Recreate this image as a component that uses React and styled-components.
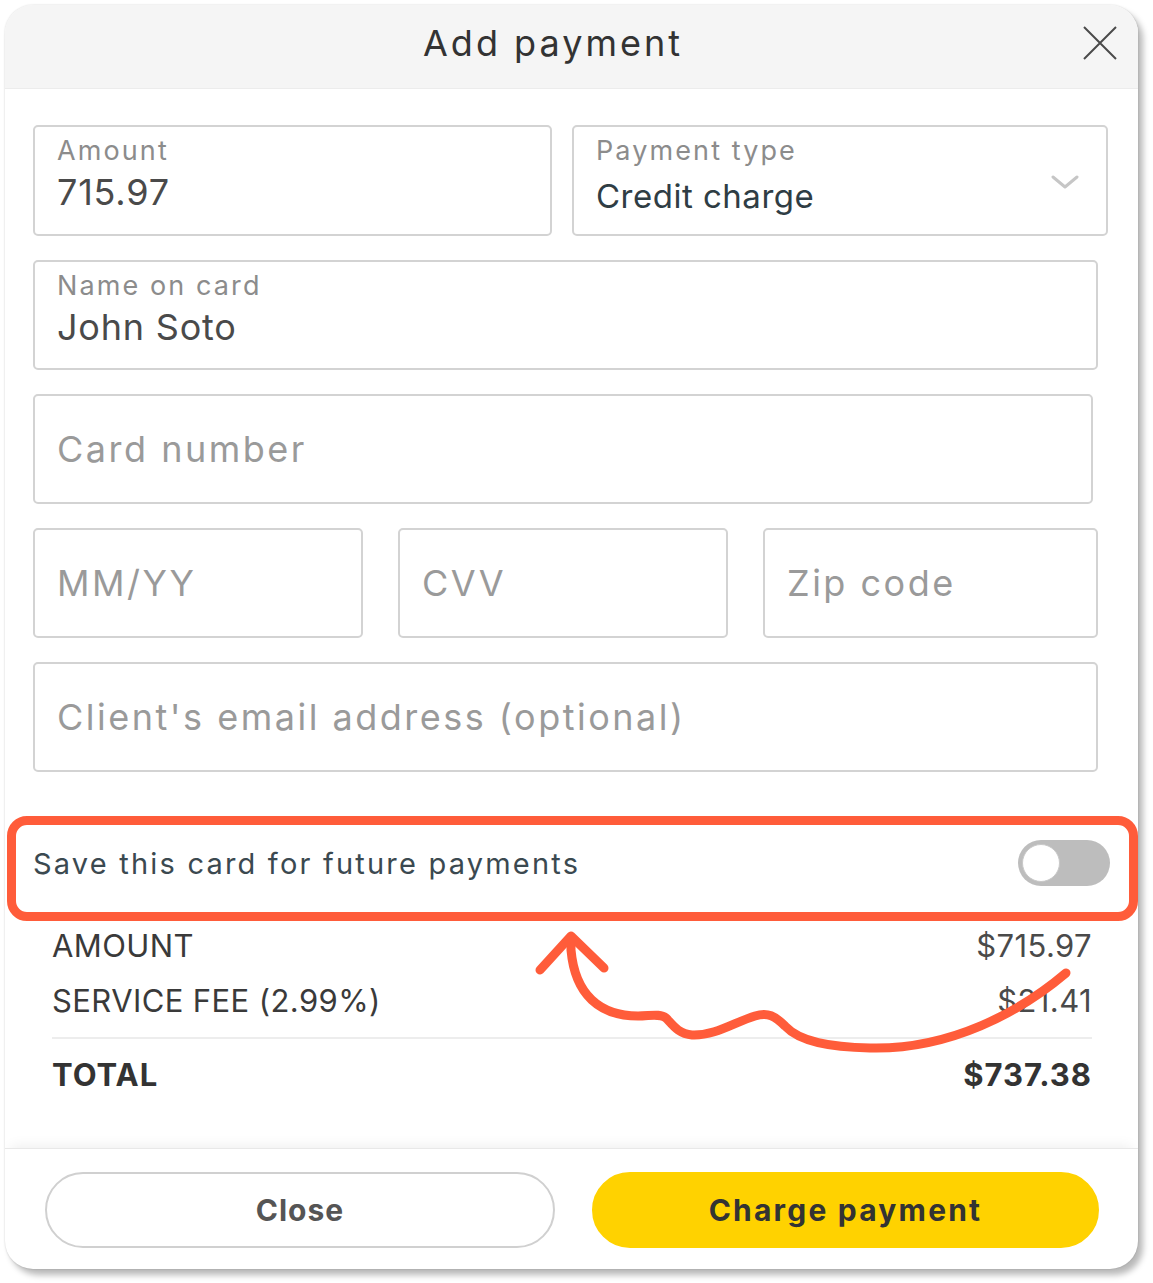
import React, { useState } from 'react';
import styled, { createGlobalStyle } from 'styled-components';

const GlobalStyle = createGlobalStyle`
  html, body {
    margin: 0;
    padding: 0;
    background: #ffffff;
  }

  body {
    font-family: Inter, 'Open Sans', sans-serif;
    -webkit-font-smoothing: antialiased;
  }
`;

const Page = styled.div`
  position: relative;
  width: 1153px;
  height: 1283px;
  padding: 5px 0 0 5px;
  box-sizing: border-box;
`;

const Modal = styled.div`
  width: 1133px;
  background: #ffffff;
  border-radius: 28px;
  overflow: hidden;
  box-shadow: 5px 6px 6px rgba(0, 0, 0, 0.28), 0 0 2px rgba(0, 0, 0, 0.18);
`;

const Header = styled.header`
  display: grid;
  grid-template-columns: 1fr auto 1fr;
  align-items: center;
  height: 84px;
  background: #f5f5f5;
  border-bottom: 1px solid #ececec;
  box-sizing: border-box;
  padding: 0 21px 0 0;

  h2 {
    grid-column: 2;
    margin: 0 16px 8px 0;
    font-size: 36px;
    font-weight: 400;
    color: #333333;
    letter-spacing: 3px;
  }
`;

const CloseIcon = styled.button`
  grid-column: 3;
  justify-self: end;
  width: 34px;
  height: 34px;
  padding: 0;
  margin-bottom: 8px;
  border: none;
  background: transparent;
  cursor: pointer;

  svg {
    display: block;
  }
`;

const Body = styled.div`
  display: flex;
  flex-direction: column;
  gap: 24px;
  padding: 36px 0 0 28px;
`;

const Row = styled.div`
  display: grid;
  grid-template-columns: ${({ $cols }) => $cols};
  column-gap: ${({ $gap }) => $gap}px;
`;

const Field = styled.div`
  position: relative;
  display: flex;
  flex-direction: column;
  justify-content: ${({ $empty }) => ($empty ? 'center' : 'flex-start')};
  width: ${({ $w }) => ($w ? `${$w}px` : 'auto')};
  height: ${({ $h }) => $h || 110}px;
  box-sizing: border-box;
  padding: ${({ $empty }) => ($empty ? '0 0 0 22px' : '8px 22px 0')};
  border: 2px solid #d3d3d3;
  border-radius: 5px;
  background: #ffffff;
`;

const Label = styled.span`
  font-size: 27px;
  line-height: 32px;
  color: #8c8c8c;
  letter-spacing: 2.1px;
`;

const Value = styled.span`
  margin-top: ${({ $dark }) => ($dark ? 8 : 4)}px;
  font-size: ${({ $dark }) => ($dark ? 33 : 36)}px;
  line-height: 42px;
  color: ${({ $dark }) => ($dark ? '#2f3d44' : '#4a4a4a')};
  letter-spacing: ${({ $dark }) => ($dark ? 0.5 : 0.8)}px;
`;

const Placeholder = styled.span`
  font-size: 36px;
  line-height: 42px;
  color: #9a9a9a;
  letter-spacing: 2.5px;
`;

const Chevron = styled.svg`
  position: absolute;
  right: 27px;
  top: 48px;
`;

const SaveRow = styled.label`
  display: flex;
  align-items: center;
  justify-content: space-between;
  height: 105px;
  margin: 44px 0 0 2px;
  padding: 0 19px 11px 17px;
  box-sizing: border-box;
  border: 9px solid #ff5c3a;
  border-radius: 20px;
  font-size: 29px;
  color: #3b4950;
  letter-spacing: 2.2px;
  cursor: pointer;
`;

const Toggle = styled.span`
  position: relative;
  display: block;
  width: 92px;
  height: 46px;
  border-radius: 23px;
  background: ${({ $on }) => ($on ? '#ffd200' : '#bdbdbd')};
  flex-shrink: 0;

  &::after {
    content: '';
    position: absolute;
    top: 4px;
    left: ${({ $on }) => ($on ? '50px' : '4px')};
    width: 38px;
    height: 38px;
    box-sizing: border-box;
    border-radius: 50%;
    background: #ffffff;
    border: 1.5px solid #c9c9c9;
  }
`;

const Summary = styled.div`
  margin-top: -3px;
  padding: 0 46px 46px 47px;
`;

const SummaryRow = styled.div`
  display: flex;
  justify-content: space-between;
  align-items: center;
  height: 55px;
  font-size: 31px;
  font-weight: ${({ $total }) => ($total ? 700 : 400)};
  color: ${({ $total }) => ($total ? '#333333' : '#3a3a3a')};
  letter-spacing: ${({ $total }) => ($total ? '1px' : '0.4px')};

  span:last-child {
    color: ${({ $total }) => ($total ? '#333333' : '#4a4a4a')};
  }
`;

const Divider = styled.hr`
  margin: 9px 0 8px;
  border: none;
  height: 2px;
  background: #ededed;
`;

const Footer = styled.footer`
  display: grid;
  grid-template-columns: 510px 507px;
  column-gap: 37px;
  padding: 23px 39px 21px 40px;
  border-top: 1px solid #e8e8e8;
  box-shadow: 0 -8px 12px -6px rgba(0, 0, 0, 0.07);
`;

const Button = styled.button`
  height: 76px;
  border-radius: 38px;
  border: 2px solid ${({ $primary }) => ($primary ? '#ffd200' : '#d0d0d0')};
  background: ${({ $primary }) => ($primary ? '#ffd200' : '#ffffff')};
  color: ${({ $primary }) => ($primary ? '#333333' : '#555555')};
  font-family: Inter, 'Open Sans', sans-serif;
  font-size: 30px;
  font-weight: 700;
  letter-spacing: ${({ $primary }) => ($primary ? 2.2 : 1)}px;
  cursor: pointer;
`;

const Annotation = styled.svg`
  position: absolute;
  top: 0;
  left: 0;
  pointer-events: none;
`;

const App = () => {
  const [saveCard, setSaveCard] = useState(false);

  return (
    <Page>
      <GlobalStyle />
      <Modal>
        <Header>
          <h2>Add payment</h2>
          <CloseIcon aria-label="Close">
            <svg width="34" height="34" viewBox="0 0 34 34">
              <path d="M1 1 L33 33 M33 1 L1 33" stroke="#4a4a4a" strokeWidth="2" fill="none" />
            </svg>
          </CloseIcon>
        </Header>

        <Body>
          <Row $cols="519px 536px" $gap={20}>
            <Field $h={111}>
              <Label>Amount</Label>
              <Value>715.97</Value>
            </Field>
            <Field $h={111}>
              <Label>Payment type</Label>
              <Value $dark>Credit charge</Value>
              <Chevron width="28" height="14" viewBox="0 0 28 14">
                <path d="M2 2 L14 12 L26 2" stroke="#c6c6c6" strokeWidth="3" fill="none" strokeLinecap="round" strokeLinejoin="round" />
              </Chevron>
            </Field>
          </Row>

          <Field $w={1065}>
            <Label>Name on card</Label>
            <Value>John Soto</Value>
          </Field>

          <Field $w={1060} $empty>
            <Placeholder>Card number</Placeholder>
          </Field>

          <Row $cols="330px 330px 335px" $gap={35}>
            <Field $empty>
              <Placeholder>MM/YY</Placeholder>
            </Field>
            <Field $empty>
              <Placeholder>CVV</Placeholder>
            </Field>
            <Field $empty>
              <Placeholder>Zip code</Placeholder>
            </Field>
          </Row>

          <Field $w={1065} $empty>
            <Placeholder>Client's email address (optional)</Placeholder>
          </Field>
        </Body>

        <SaveRow onClick={() => setSaveCard((v) => !v)}>
          Save this card for future payments
          <Toggle $on={saveCard} />
        </SaveRow>

        <Summary>
          <SummaryRow>
            <span>AMOUNT</span>
            <span>$715.97</span>
          </SummaryRow>
          <SummaryRow>
            <span>SERVICE FEE (2.99%)</span>
            <span>$21.41</span>
          </SummaryRow>
          <Divider />
          <SummaryRow $total>
            <span>TOTAL</span>
            <span>$737.38</span>
          </SummaryRow>
        </Summary>

        <Footer>
          <Button>Close</Button>
          <Button $primary>Charge payment</Button>
        </Footer>
      </Modal>

      <Annotation width="1153" height="1283" viewBox="0 0 1153 1283">
        <g stroke="#ff5c3a" strokeWidth="9" fill="none" strokeLinecap="round" strokeLinejoin="round">
          <path d="M1066 973 C1020 1012 950 1050 870 1048 C830 1047 800 1042 785 1026 C775 1016 768 1012 755 1016 C735 1022 715 1036 692 1035 C678 1034 672 1024 666 1018 C660 1013 650 1016 638 1016 C600 1016 575 995 571 950 L571 938" />
          <path d="M540 970 L571 936 L604 968" />
        </g>
      </Annotation>
    </Page>
  );
};

export default App;
